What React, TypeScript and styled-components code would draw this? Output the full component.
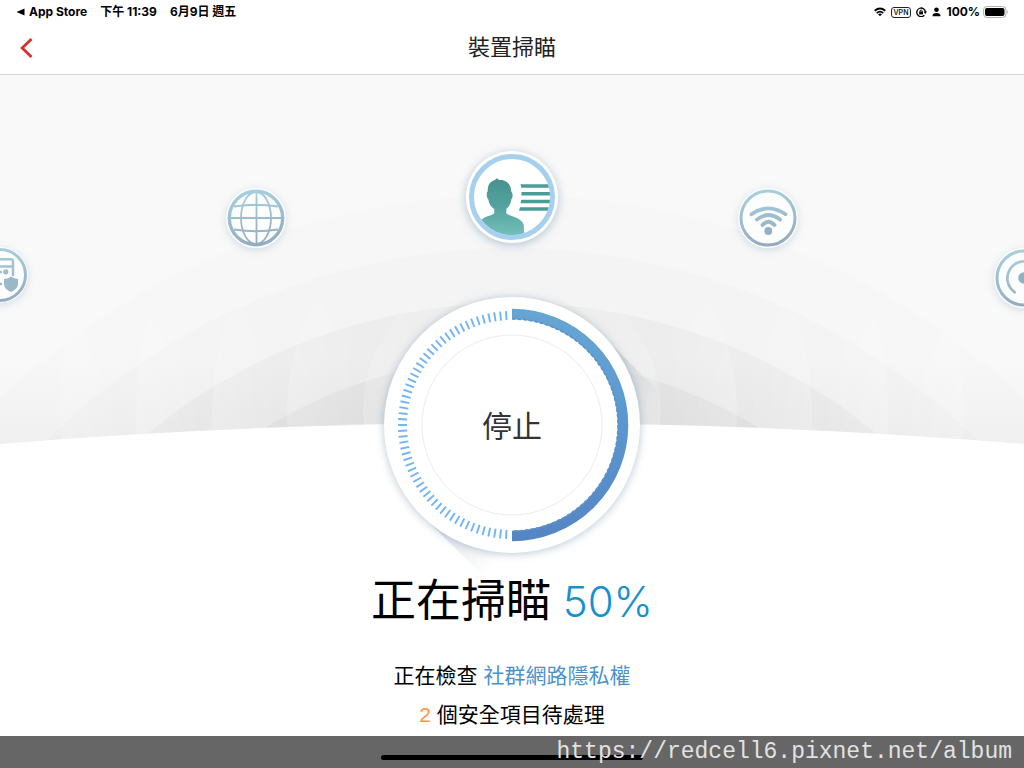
import React from "react";
import styled, { createGlobalStyle } from "styled-components";

const GlobalStyle = createGlobalStyle`
  *, *::before, *::after { box-sizing: border-box; }
  body {
    margin: 0;
    background: #fff;
    color: #000;
    font-family: Roboto, "Noto Sans CJK TC", sans-serif;
  }
  h1, h2, p { margin: 0; font-weight: 400; }
`;

const Screen = styled.div`
  display: flex;
  flex-direction: column;
  min-height: 100vh;
  overflow: hidden;
`;

const StatusBar = styled.div`
  display: flex;
  align-items: center;
  justify-content: space-between;
  height: 24px;
  padding: 0 15px 0 16px;
  font: 700 12px/24px Inter, "Noto Sans CJK TC", sans-serif;
  white-space: pre;
`;

const StatusGroup = styled.div<{ $gap: number }>`
  display: flex;
  align-items: center;
  gap: ${(p) => p.$gap}px;
`;

const BackToApp = styled.a`
  display: flex;
  align-items: center;
  gap: 4px;
  color: inherit;
  text-decoration: none;
`;

const Icon = styled.svg`
  display: block;
  flex: none;
`;

const NavBar = styled.header`
  display: grid;
  grid-template-columns: 1fr auto 1fr;
  align-items: center;
  height: 51px;
  padding: 0 12px 2px;
  border-bottom: 1px solid #d6d6d6;
`;

const BackButton = styled.button`
  justify-self: start;
  padding: 4px 8px;
  border: 0;
  background: none;
  cursor: pointer;
`;

const Title = styled.h1`
  color: #222;
  font-size: 22px;
  line-height: 48px;
`;

const Main = styled.main`
  flex: 1;
  display: grid;
  grid-template-columns: 100%;
  align-content: start;
`;

const Backdrop = styled.svg`
  grid-area: 1 / 1;
  display: block;
  width: 100%;
`;

const Content = styled.div`
  grid-area: 1 / 1;
  display: flex;
  flex-direction: column;
  align-items: center;
`;

const Orbit = styled.ul`
  display: grid;
  grid-template-columns: repeat(5, 1fr);
  justify-items: center;
  align-items: start;
  width: 125%;
  height: 222px;
  margin: 0;
  padding: 0;
  list-style: none;
`;

const Badge = styled.li<{ $size: number; $drop: number; $strong?: boolean }>`
  width: ${(p) => p.$size}px;
  height: ${(p) => p.$size}px;
  margin-top: ${(p) => p.$drop}px;
  border-radius: 50%;
  background: ${(p) => (p.$strong ? "#fff" : "#fcfdfd")};
  box-shadow: ${(p) =>
    p.$strong
      ? "0 2px 10px rgba(110, 145, 175, 0.5)"
      : "0 2px 8px rgba(130, 160, 185, 0.3)"};
`;

const Dial = styled.button`
  display: grid;
  place-items: center;
  width: 256px;
  height: 256px;
  padding: 0;
  border: 0;
  border-radius: 50%;
  background: #fff;
  box-shadow: 0 1px 9px rgba(100, 130, 160, 0.45);
  color: #333;
  cursor: pointer;
`;

const DialRing = styled.svg`
  grid-area: 1 / 1;
`;

const DialLabel = styled.span`
  grid-area: 1 / 1;
  padding-bottom: 2px;
  font: 400 30px/40px "Noto Sans CJK TC", sans-serif;
`;

const Headline = styled.h2`
  margin-top: 17px;
  font-family: "Open Sans", "Noto Sans CJK TC", sans-serif;
  font-size: 45px;
  line-height: 60px;
`;

const Percent = styled.span`
  color: #1591d0;
  font-family: Inter, sans-serif;
  font-size: 42px;
  font-weight: 300;
`;

const Details = styled.div`
  margin-top: 24px;
  font: 400 21px/39px "Liberation Sans", "Noto Sans CJK TC", sans-serif;
  text-align: center;
`;

const Tint = styled.span<{ $color: string }>`
  color: ${(p) => p.$color};
`;

const Footer = styled.footer`
  display: grid;
  align-items: center;
  height: 32px;
  padding: 0 12px;
  background: #666;
`;

const HomeIndicator = styled.div`
  grid-area: 1 / 1;
  align-self: end;
  justify-self: center;
  width: 262px;
  height: 5px;
  margin-bottom: 8px;
  border-radius: 3px;
  background: #000;
`;

const AlbumLink = styled.a`
  grid-area: 1 / 1;
  justify-self: end;
  color: #e2e2e2;
  font: 400 23px/32px "Liberation Mono", monospace;
  text-decoration: none;
`;

const domes = [
  { top: 195, r: 750, shade: 0.006 },
  { top: 248, r: 660, shade: 0.011 },
  { top: 303, r: 575, shade: 0.026 },
  { top: 358, r: 472, shade: 0.032 },
];

const ripples = [452, 376, 300, 225, 149];

function Scene() {
  return (
    <Backdrop viewBox="0 75 1024 510" aria-hidden="true">
      <defs>
        <linearGradient id="sky" x1="0" y1="0" x2="0" y2="1">
          <stop offset="0" stopColor="#f9f9f9" />
          <stop offset="0.75" stopColor="#f9f9f9" />
          <stop offset="1" stopColor="#f1f1f1" />
        </linearGradient>
        <linearGradient id="rippleFade" gradientUnits="userSpaceOnUse" x1="0" y1="250" x2="0" y2="370">
          <stop offset="0" stopColor="#000" />
          <stop offset="1" stopColor="#fff" />
        </linearGradient>
        <mask id="rippleMask">
          <rect x="0" y="75" width="1024" height="510" fill="url(#rippleFade)" />
        </mask>
        {ripples.map((r) => (
          <radialGradient key={r} id={`ripple${r}`}>
            <stop offset={(r - 75) / r} stopColor="#fff" stopOpacity="0" />
            <stop offset="1" stopColor="#fff" stopOpacity="0.2" />
          </radialGradient>
        ))}
        <linearGradient id="castShadow" gradientUnits="userSpaceOnUse" x1="512" y1="425" x2="572" y2="485">
          <stop offset="0" stopColor="#8798a4" stopOpacity="0.45" />
          <stop offset="0.4" stopColor="#8798a4" stopOpacity="0.22" />
          <stop offset="1" stopColor="#8798a4" stopOpacity="0" />
        </linearGradient>
      </defs>
      <rect x="0" y="75" width="1024" height="380" fill="url(#sky)" />
      {domes.map((d) => (
        <circle key={d.top} cx="512" cy={d.top + d.r} r={d.r} fill="#000" fillOpacity={d.shade} />
      ))}
      <g mask="url(#rippleMask)">
        {ripples.map((r) => (
          <circle key={r} cx="512" cy="412" r={r} fill={`url(#ripple${r})`} />
        ))}
      </g>
      <path d="M0 444Q512 402 1024 444V585H0Z" fill="#fff" />
      <path d="M422 515L602 335L662 395L482 575Z" fill="url(#castShadow)" />
    </Backdrop>
  );
}

function BadgeDefs() {
  return (
    <defs>
      <linearGradient id="steel" gradientUnits="userSpaceOnUse" x1="24" y1="0" x2="36" y2="60">
        <stop offset="0" stopColor="#a9d0dd" />
        <stop offset="1" stopColor="#92a9bd" />
      </linearGradient>
    </defs>
  );
}

function DocumentIcon() {
  return (
    <Icon width="56" height="56" viewBox="0 0 56 56" fill="none" stroke="url(#steel)">
      <BadgeDefs />
      <circle cx="28" cy="28" r="25.5" strokeWidth="3" />
      <g strokeWidth="2.4" strokeLinecap="round">
        <path d="M41 28V14.5Q41 12.2 38.700 12.2H18Q15.500 12.2 15.500 14.500V34.500Q15.500 37 18 37H29" />
        <path d="M16 19.500H40M21 25H29" />
      </g>
      <circle cx="33.800" cy="24.800" r="2.600" fill="#9dbccb" stroke="none" />
      <path d="M39 29.500Q43 32 46 32V37.500Q45.500 42 39 45Q32.500 42 32 37.500V32Q36 32 39 29.500Z" fill="#9bb8c8" stroke="none" />
    </Icon>
  );
}

function GlobeIcon() {
  return (
    <Icon width="60" height="60" viewBox="0 0 60 60" fill="none" stroke="url(#steel)">
      <circle cx="30" cy="30" r="26.700" strokeWidth="3.400" />
      <g strokeWidth="1.800">
        <ellipse cx="30" cy="30" rx="15" ry="26" />
        <path d="M30.500 4V56M4 29.500V30H56V29.500M8 18.500Q30 15 52 18.500M8 41.500Q30 45 52 41.500" />
      </g>
    </Icon>
  );
}

function ProfileIcon() {
  return (
    <Icon width="92" height="92" viewBox="0 0 92 92">
      <defs>
        <linearGradient id="person" x1="0" y1="0" x2="0" y2="1">
          <stop offset="0" stopColor="#45928f" />
          <stop offset="0.45" stopColor="#55a39f" />
          <stop offset="1" stopColor="#79c5be" />
        </linearGradient>
        <clipPath id="profileClip">
          <circle cx="46" cy="46" r="38.500" />
        </clipPath>
      </defs>
      <g clipPath="url(#profileClip)">
        <path
          d="M31 27.200L33 29C39 28.500 45 32 45.200 40.500C47 42 47.200 46 45.300 48.500C44.500 54 42.500 56 40.300 58V62.500C46 66 58 67 58 76V90H10V72L16.500 68C20 65 25 65 28.200 62.500V58C25 56 23 53 22.300 48.500C20.300 46 20.300 42 21.700 40.500C21.500 34 24 30.500 28.800 29Z"
          fill="url(#person)"
        />
        <g fill="#4b9b97">
          <path d="M54.500 33.300H90V36.800H55.300Z" />
          <path d="M55.500 41H90V44.500H55.500Z" />
          <path d="M55.300 48.700H90V52.200H54.500Z" />
          <path d="M54 56.300H90V59.800H53Z" />
        </g>
      </g>
      <circle cx="46" cy="46" r="40.500" fill="none" stroke="#a6d0ed" strokeWidth="5" />
    </Icon>
  );
}

function WifiIcon() {
  return (
    <Icon width="60" height="60" viewBox="0 0 60 60" fill="none" stroke="url(#steel)">
      <circle cx="30" cy="30" r="27" strokeWidth="3" />
      <g strokeWidth="3.800" strokeLinecap="round">
        <path d="M13.500 26.300Q30.300 14.500 47.500 26.300" />
        <path d="M19 31.600Q30.300 22.500 42 31.600" />
        <path d="M24.500 37Q30.300 30.500 36.500 37" />
      </g>
      <circle cx="30.300" cy="43" r="3.900" fill="#95b2c3" stroke="none" />
    </Icon>
  );
}

function RadarIcon() {
  return (
    <Icon width="60" height="60" viewBox="0 0 60 60" fill="none" stroke="url(#steel)">
      <circle cx="30" cy="30" r="27" strokeWidth="3" />
      <path d="M20.700 44.300A17 17 0 0 1 30 13.300A17 17 0 0 1 39.300 44.300" strokeWidth="2.600" strokeLinecap="round" />
      <circle cx="30" cy="30" r="5.800" fill="#8fb2c2" stroke="none" />
    </Icon>
  );
}

const TICKS = Array.from({ length: 59 }, (_, i) => 183 + i * 3);
const TEETH = Array.from({ length: 60 }, (_, i) => 1 + i * 3);

function ProgressRing() {
  return (
    <DialRing width="256" height="256" viewBox="0 0 256 256" aria-hidden="true">
      <defs>
        <linearGradient id="progress" gradientUnits="userSpaceOnUse" x1="0" y1="12" x2="0" y2="244">
          <stop offset="0" stopColor="#66a6d3" />
          <stop offset="0.5" stopColor="#5b97cf" />
          <stop offset="1" stopColor="#5585c3" />
        </linearGradient>
      </defs>
      <circle cx="128" cy="128" r="90" fill="none" stroke="#ececec" />
      <g stroke="#72b4f6" strokeWidth="1.900">
        {TICKS.map((a) => (
          <path key={a} d="M128 14V23" transform={`rotate(${a} 128 128)`} />
        ))}
      </g>
      <path d="M128 17A111 111 0 0 1 128 239" fill="none" stroke="url(#progress)" strokeWidth="10.500" />
      <g stroke="#5b93cc" strokeWidth="3.600">
        {TEETH.map((a) => (
          <path key={a} d="M128 21V22.800" transform={`rotate(${a} 128 128)`} />
        ))}
      </g>
    </DialRing>
  );
}

function StatusIcons() {
  return (
    <StatusGroup $gap={5}>
      <Icon width="12" height="10" viewBox="0 0 13 10" fill="none" stroke="#000" strokeWidth="2" aria-label="Wi-Fi">
        <path d="M0.800 3.600Q6.500 -1.200 12.200 3.600M3 6Q6.500 3.200 10 6" />
        <path d="M6.500 9.700L4.400 7.500Q6.500 6 8.600 7.500Z" fill="#000" stroke="none" />
      </Icon>
      <Icon width="20" height="11" viewBox="0 0 20 11" aria-label="VPN">
        <rect x="0.500" y="0.500" width="19" height="10" rx="2.500" fill="none" stroke="#222" />
        <text x="10" y="8" textAnchor="middle" fontFamily="Inter, sans-serif" fontSize="7" fontWeight="600" fill="#222">VPN</text>
      </Icon>
      <Icon width="11" height="10" viewBox="0 0 11 10" fill="none" stroke="#000" strokeWidth="1.300">
        <path d="M8.300 8.200A4.300 4.300 0 1 1 9.400 5" />
        <path d="M7.600 4.600H11L9.300 6.900Z" fill="#000" stroke="none" />
        <rect x="3.200" y="4.500" width="3.800" height="2.900" fill="#000" stroke="none" />
        <path d="M4 4.700V3.700Q5.100 2 6.200 3.700V4.700" strokeWidth="0.900" />
      </Icon>
      <Icon width="9" height="10" viewBox="0 0 9 10">
        <circle cx="4.500" cy="2.700" r="2.300" />
        <path d="M0.500 9.300Q0.500 6 4.500 6T8.500 9.300Z" />
      </Icon>
      <StatusGroup $gap={3}>
        100%
        <Icon width="26" height="12" viewBox="0 0 26 12">
          <rect x="0.500" y="0.500" width="22.500" height="11" rx="3.500" fill="none" stroke="#b0b0b0" />
          <rect x="2" y="2" width="19.500" height="8" rx="2" />
          <path d="M24 4Q25.800 6 24 8Z" fill="#a8a8a8" />
        </Icon>
      </StatusGroup>
    </StatusGroup>
  );
}

export default function App() {
  return (
    <Screen>
      <GlobalStyle />
      <StatusBar>
        <StatusGroup $gap={13}>
          <BackToApp href="#app-store">
            <Icon width="9" height="8" viewBox="0 0 9 8">
              <path d="M0.500 4L8.500 0.500V7.500Z" />
            </Icon>
            App Store
          </BackToApp>
          <span>下午 11:39</span>
          <span>6月9日 週五</span>
        </StatusGroup>
        <StatusIcons />
      </StatusBar>
      <NavBar>
        <BackButton aria-label="返回">
          <Icon width="13" height="20" viewBox="0 0 13 20" fill="none" stroke="#d9302a" strokeWidth="2.800">
            <path d="M11.500 1L2.200 10L11.500 19" />
          </Icon>
        </BackButton>
        <Title>裝置掃瞄</Title>
      </NavBar>
      <Main>
        <Scene />
        <Content>
          <Orbit>
            <Badge $size={56} $drop={172}><DocumentIcon /></Badge>
            <Badge $size={60} $drop={113}><GlobeIcon /></Badge>
            <Badge $size={92} $drop={76} $strong><ProfileIcon /></Badge>
            <Badge $size={60} $drop={113}><WifiIcon /></Badge>
            <Badge $size={60} $drop={173}><RadarIcon /></Badge>
          </Orbit>
          <Dial>
            <ProgressRing />
            <DialLabel>停止</DialLabel>
          </Dial>
          <Headline>
            正在掃瞄 <Percent>50%</Percent>
          </Headline>
          <Details>
            <p>正在檢查 <Tint $color="#4b92cc">社群網路隱私權</Tint></p>
            <p><Tint $color="#ff9540">2</Tint> 個安全項目待處理</p>
          </Details>
        </Content>
      </Main>
      <Footer>
        <HomeIndicator />
        <AlbumLink href="https://redcell6.pixnet.net/album">https://redcell6.pixnet.net/album</AlbumLink>
      </Footer>
    </Screen>
  );
}
